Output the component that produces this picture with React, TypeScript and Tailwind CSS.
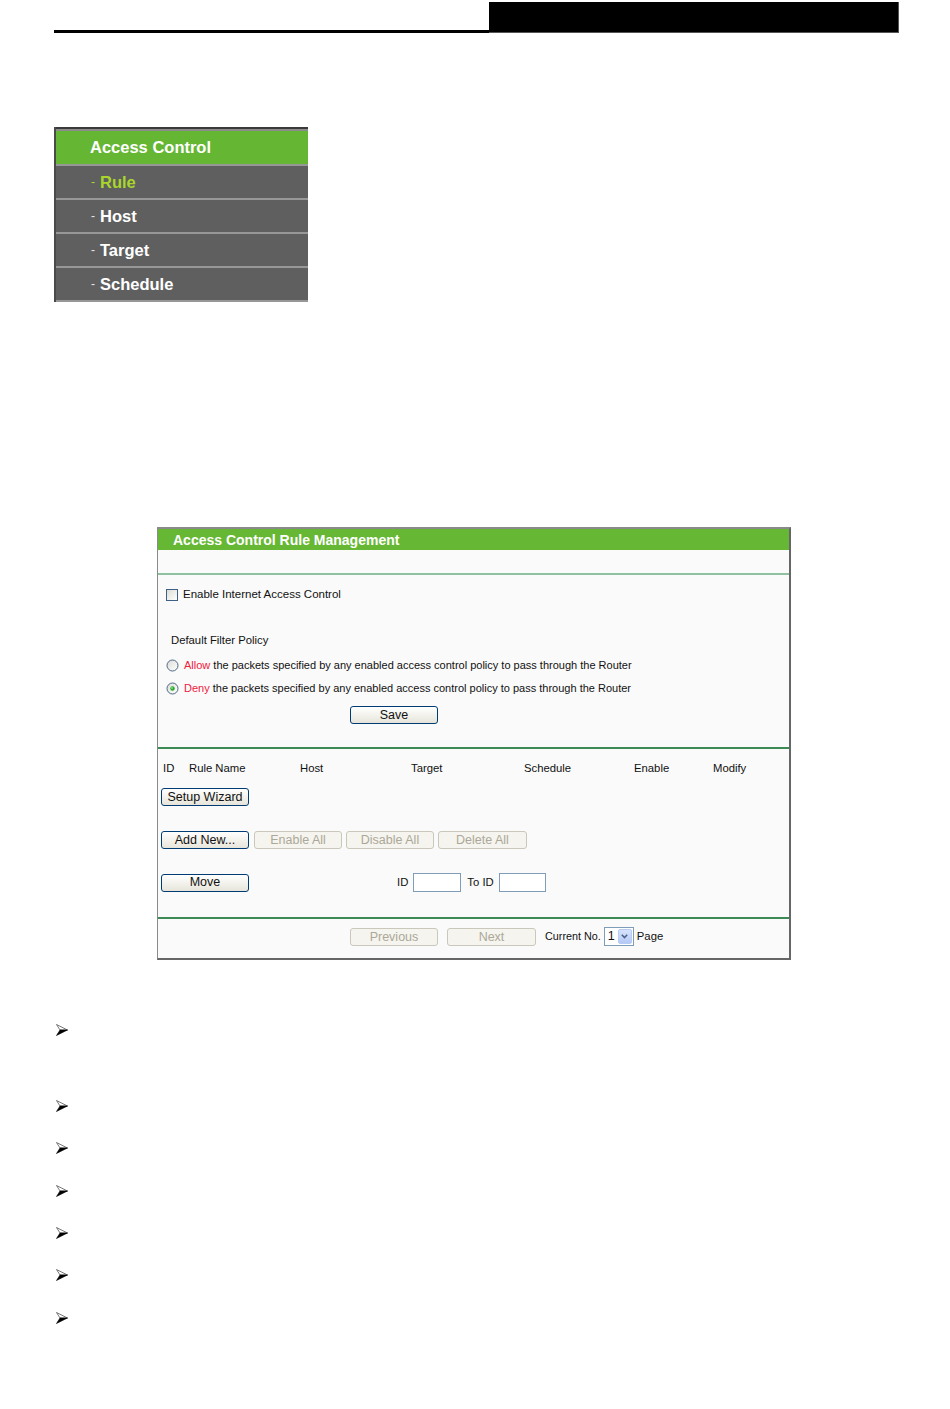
import React from "react";

const Btn = ({ children, className = "", disabled = false }: { children: React.ReactNode; className?: string; disabled?: boolean }) => (
  <div
    className={
      "h-[18px] flex items-center justify-center rounded-[3px] border text-[12.5px] leading-none " +
      (disabled
        ? "border-[#cac8bb] text-[#aca899] bg-[#f5f4ee] "
        : "border-[#003c74] text-[#111] bg-linear-to-b from-white to-[#e7e5da] ") +
      className
    }
  >
    {children}
  </div>
);

const Radio = ({ checked = false }: { checked?: boolean }) => (
  <svg width="13" height="13" viewBox="0 0 13 13" className="shrink-0">
    <defs>
      <linearGradient id={checked ? "rg1" : "rg0"} x1="0" y1="0" x2="1" y2="1">
        <stop offset="0" stopColor="#dcdcd6" />
        <stop offset="1" stopColor="#ffffff" />
      </linearGradient>
    </defs>
    <circle cx="6.5" cy="6.5" r="5.5" fill={`url(#${checked ? "rg1" : "rg0"})`} stroke="#4e6785" strokeWidth="1" />
    {checked && <circle cx="6.5" cy="6.5" r="2.2" fill="#2aa82a" />}
    {checked && <circle cx="6" cy="6" r="0.9" fill="#8ce08c" />}
  </svg>
);

const Arrow = () => (
  <svg width="12" height="12" viewBox="0 0 12 12">
    <polygon points="0.5,0.5 11.5,6 4,6" fill="#fff" stroke="#555" strokeWidth="0.8" strokeLinejoin="round" />
    <polygon points="4,6 11.5,6 0.5,11.5" fill="#000" stroke="#000" strokeWidth="0.6" strokeLinejoin="round" />
  </svg>
);

const MenuRow = ({ label, active = false }: { label: string; active?: boolean }) => (
  <>
    <div className="h-[2px] bg-[#979797]" />
    <div className="h-[32px] bg-[#5f5f5f] flex items-center pl-[35px]">
      <span className={"text-[12px] leading-none mr-[5px] " + (active ? "text-[#a9d62c]" : "text-[#e6e6e6]")}>-</span>
      <span className={"text-[16.5px] font-bold leading-none " + (active ? "text-[#a9d62c]" : "text-white")}>{label}</span>
    </div>
  </>
);

export default function App() {
  return (
    <div className="w-[950px] h-[1409px] bg-white font-['Liberation_Sans',Arial,sans-serif] overflow-hidden">
      {/* page header */}
      <div className="flex items-end pl-[54px] pt-[2px]">
        <div className="w-[435px] h-[3px] bg-black" />
        <div className="w-[410px] h-[31px] bg-black border-r border-b border-[#555]" />
      </div>

      {/* side menu */}
      <div className="ml-[54px] mt-[94px] w-[254px] border-l-2 border-[#4a4a4a]">
        <div className="h-[2px] bg-[#3a3a3a]" />
        <div className="h-[2px] bg-[#8c8c8c]" />
        <div className="h-[33px] bg-[#65b632] flex items-center pl-[34px]">
          <span className="text-[16.5px] font-bold text-white leading-none">Access Control</span>
        </div>
        <MenuRow label="Rule" active />
        <MenuRow label="Host" />
        <MenuRow label="Target" />
        <MenuRow label="Schedule" />
        <div className="h-[2px] bg-[#979797]" />
      </div>

      {/* panel */}
      <div className="ml-[157px] mt-[225px] w-[634px] border-t-2 border-l border-[#8a8a8a] border-r-2 border-r-[#666] border-b-2 border-b-[#666] bg-[#fafafa] text-[11.3px] text-[#111]">
        <div className="h-[21px] bg-[#66b733] flex items-center pl-[15px]">
          <span className="text-[14px] font-bold text-white leading-none">Access Control Rule Management</span>
        </div>
        <div className="h-[23px]" />
        <div className="h-[2px] bg-[#8fc1a0]" />

        <div className="h-[40px] flex items-center pl-[8px] gap-[5px]">
          <div className="w-[12px] h-[12px] border border-[#3f5f86] bg-linear-to-br from-[#dcdcd6] to-white" />
          <span className="text-[11.5px]">Enable Internet Access Control</span>
        </div>
        <div className="h-[13px]" />
        <div className="h-[25px] flex items-center pl-[13px]">Default Filter Policy</div>
        <div className="h-[24px] flex items-center pl-[8px] gap-[5px] text-[11px]">
          <Radio />
          <span>
            <span className="text-[#f0203c]">Allow</span> the packets specified by any enabled access control policy to pass through the Router
          </span>
        </div>
        <div className="h-[23px] flex items-center pl-[8px] gap-[5px] text-[11px]">
          <Radio checked />
          <span>
            <span className="text-[#f0203c]">Deny</span> the packets specified by any enabled access control policy to pass through the Router
          </span>
        </div>
        <div className="pt-[6px] pb-[23px] pl-[192px]">
          <Btn className="w-[88px]">Save</Btn>
        </div>

        <div className="h-[2px] bg-[#3c8a55]" />

        <div className="h-[38px] flex items-center pl-[5px]">
          <span className="w-[26px]">ID</span>
          <span className="w-[111px]">Rule Name</span>
          <span className="w-[111px]">Host</span>
          <span className="w-[113px]">Target</span>
          <span className="w-[110px]">Schedule</span>
          <span className="w-[79px]">Enable</span>
          <span>Modify</span>
        </div>
        <div className="pl-[3px] mt-[1px]">
          <Btn className="w-[88px]">Setup Wizard</Btn>
        </div>
        <div className="pl-[3px] mt-[25px] flex gap-[4px]">
          <Btn className="w-[88px]">Add New...</Btn>
          <Btn className="w-[88px] ml-[1px]" disabled>Enable All</Btn>
          <Btn className="w-[88px]" disabled>Disable All</Btn>
          <Btn className="w-[89px]" disabled>Delete All</Btn>
        </div>
        <div className="pl-[3px] mt-[24px] h-[19px] flex items-center">
          <Btn className="w-[88px]">Move</Btn>
          <span className="ml-[148px]">ID</span>
          <div className="ml-[5px] w-[48px] h-[19px] border border-[#7f9db9] bg-white" />
          <span className="ml-[6px]">To ID</span>
          <div className="ml-[5px] w-[47px] h-[19px] border border-[#7f9db9] bg-white" />
        </div>
        <div className="mt-[25px] h-[2px] bg-[#3c8a55]" />
        <div className="pt-[8px] pb-[12px] pl-[192px] flex items-start">
          <Btn className="w-[88px] mt-[1px]" disabled>Previous</Btn>
          <Btn className="w-[89px] mt-[1px] ml-[9px]" disabled>Next</Btn>
          <span className="ml-[9px] h-[19px] flex items-center text-[10.8px]">Current No.</span>
          <div className="ml-[3px] w-[30px] h-[19px] border border-[#7f9db9] bg-white flex items-center">
            <span className="pl-[3px] w-[13px] text-[12.5px] leading-none text-[#111]">1</span>
            <div className="w-[14px] h-[15px] rounded-[2px] bg-linear-to-b from-[#d6e3fd] to-[#b4c9f6] border border-[#b8cbf5] flex items-center justify-center">
              <svg width="7" height="5" viewBox="0 0 7 5">
                <path d="M0.8 0.8 L3.5 3.6 L6.2 0.8" fill="none" stroke="#4d6185" strokeWidth="1.5" />
              </svg>
            </div>
          </div>
          <span className="ml-[3px] h-[19px] flex items-center">Page</span>
        </div>
      </div>

      {/* bullets */}
      <div className="ml-[56px] mt-[64px] flex flex-col">
        <Arrow />
        <div className="mt-[64px]"><Arrow /></div>
        <div className="mt-[30px]"><Arrow /></div>
        <div className="mt-[31px]"><Arrow /></div>
        <div className="mt-[30px]"><Arrow /></div>
        <div className="mt-[30px]"><Arrow /></div>
        <div className="mt-[31px]"><Arrow /></div>
      </div>
    </div>
  );
}
